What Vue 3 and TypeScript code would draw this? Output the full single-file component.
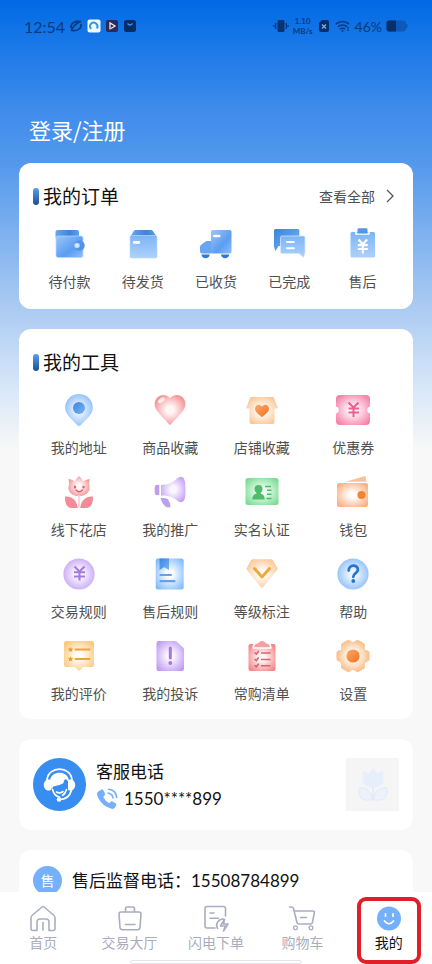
<script setup lang="ts">
interface Entry {
  icon: string
  label: string
}

const orders: Entry[] = [
  { icon: 'wallet', label: '待付款' },
  { icon: 'parcel', label: '待发货' },
  { icon: 'truck', label: '已收货' },
  { icon: 'chat', label: '已完成' },
  { icon: 'refund', label: '售后' },
]

const tools: Entry[] = [
  { icon: 'pin', label: '我的地址' },
  { icon: 'heart', label: '商品收藏' },
  { icon: 'shop', label: '店铺收藏' },
  { icon: 'coupon', label: '优惠券' },
  { icon: 'tulip', label: '线下花店' },
  { icon: 'horn', label: '我的推广' },
  { icon: 'idcard', label: '实名认证' },
  { icon: 'purse', label: '钱包' },
  { icon: 'yen', label: '交易规则' },
  { icon: 'book', label: '售后规则' },
  { icon: 'level', label: '等级标注' },
  { icon: 'help', label: '帮助' },
  { icon: 'review', label: '我的评价' },
  { icon: 'complaint', label: '我的投诉' },
  { icon: 'checklist', label: '常购清单' },
  { icon: 'gear', label: '设置' },
]

const tabs: Entry[] = [
  { icon: 'tab-home', label: '首页' },
  { icon: 'tab-hall', label: '交易大厅' },
  { icon: 'tab-flash', label: '闪电下单' },
  { icon: 'tab-cart', label: '购物车' },
  { icon: 'tab-me', label: '我的' },
]

const activeTab = '我的'

interface Glow {
  id: string
  inner: string
  outer: string
}

const glows: Glow[] = [
  { id: 'g-blue', inner: '#eaf4ff', outer: '#80b6fb' },
  { id: 'g-red', inner: '#fff6f5', outer: '#f58489' },
  { id: 'g-orange', inner: '#fffcf8', outer: '#fbc08a' },
  { id: 'g-pink', inner: '#fff4f8', outer: '#f77ea8' },
  { id: 'g-violet', inner: '#faf6ff', outer: '#c09af3' },
  { id: 'g-green', inner: '#ecfef0', outer: '#7bdb95' },
  { id: 'g-peach', inner: '#fffcfa', outer: '#fbae7e' },
  { id: 'g-sky', inner: '#fafdff', outer: '#82bdfb' },
  { id: 'g-amber', inner: '#fffcf5', outer: '#fbc777' },
]
</script>

<template>
  <div class="screen">
    <svg class="sprite" width="0" height="0" aria-hidden="true">
      <defs>
        <radialGradient v-for="g in glows" :id="g.id" :key="g.id" cx="0.5" cy="0.5" r="0.62">
          <stop offset="0.2" :stop-color="g.inner" />
          <stop offset="1" :stop-color="g.outer" />
        </radialGradient>
        <linearGradient id="l-deep" x1="0" y1="0" x2="1" y2="1">
          <stop offset="0" stop-color="#3a84de" />
          <stop offset="1" stop-color="#79b4f8" />
        </linearGradient>
        <linearGradient id="l-mid" x1="0" y1="0" x2="1" y2="1">
          <stop offset="0" stop-color="#9cc7fb" />
          <stop offset="0.6" stop-color="#5b9df0" />
          <stop offset="1" stop-color="#8fc0fa" />
        </linearGradient>
        <linearGradient id="l-soft" x1="0" y1="0" x2="0" y2="1">
          <stop offset="0" stop-color="#7db4f6" />
          <stop offset="1" stop-color="#add1fc" />
        </linearGradient>
        <linearGradient id="l-lid" x1="0" y1="0" x2="1" y2="0">
          <stop offset="0" stop-color="#6aa6ee" />
          <stop offset="0.6" stop-color="#3f83d8" />
          <stop offset="1" stop-color="#5f9eea" />
        </linearGradient>
        <linearGradient id="l-orange" x1="0" y1="0" x2="1" y2="1">
          <stop offset="0" stop-color="#ffa86a" />
          <stop offset="1" stop-color="#f0721e" />
        </linearGradient>
        <radialGradient id="g-gear" gradientUnits="userSpaceOnUse" cx="17" cy="17" r="17">
          <stop offset="0.3" stop-color="#fffaf4" />
          <stop offset="1" stop-color="#fab981" />
        </radialGradient>
      </defs>

      <symbol id="wallet" viewBox="0 0 34 34">
        <rect x="2.5" y="3" width="23.5" height="9" rx="2" fill="url(#l-lid)" />
        <rect x="3" y="9" width="27" height="21.500" rx="2" fill="url(#l-mid)" stroke="#b7d7fd" stroke-width="0.7" />
        <path d="M29 14c1.700 1.500 2.700 2.500 2.700 4.500S30.700 22 29 23.500c-3 1-8-.5-8-5s5-6 8-4.500z" fill="#4f94ec" />
        <circle cx="24" cy="18.500" r="2.800" fill="#b9dafd" />
        <circle cx="24" cy="18.500" r="1.300" fill="#e9f4ff" />
      </symbol>
      <symbol id="parcel" viewBox="0 0 34 34">
        <path d="M9.500 3h15.500q1 0 1.700.8L31 10H4l4-6.200Q8.500 3 9.500 3z" fill="url(#l-lid)" />
        <rect x="4" y="8.500" width="27" height="22.500" rx="1.500" fill="url(#l-soft)" stroke="#bcdafd" stroke-width="0.700" />
        <rect x="6.800" y="14" width="7.400" height="2.800" rx="1.400" fill="#fff" />
      </symbol>
      <symbol id="truck" viewBox="0 0 34 34">
        <path d="M2.500 17.500l4-3Q7 14 8 14h4v12.500H3q-2 0-2-2v-4.500q0-1.700 1.500-2.500z" fill="#69a6f1" />
        <rect x="12" y="3" width="20.500" height="23.500" rx="1.500" fill="url(#l-mid)" />
        <rect x="14" y="7.700" width="7.500" height="2.600" rx="1.300" fill="#fff" />
        <path d="M2.500 27.500h8.200c-.4 5-7.800 5-8.200 0zM22 27.500h8.200c-.4 5-7.800 5-8.200 0z" fill="#3278d0" />
      </symbol>
      <symbol id="chat" viewBox="0 0 34 34">
        <path d="M3.500 2h22.300q1.500 0 1.500 1.500V19H6.500l-3 5-1.500-4V3.500Q2 2 3.500 2z" fill="url(#l-deep)" />
        <path d="M10 9h21.500q1.500 0 1.500 1.500V26l-1.500 4.500L27 26.500H10q-1.500 0-1.500-1.500V10.500Q8.500 9 10 9z" fill="url(#l-soft)" stroke="#d2e6fe" stroke-width="0.8" />
        <path d="M15 15h6.800M15 21.200h6.800" stroke="#fff" stroke-width="2" stroke-linecap="round" />
      </symbol>
      <symbol id="refund" viewBox="0 0 34 34">
        <rect x="5.500" y="5" width="24.500" height="25.500" rx="1.500" fill="url(#l-soft)" />
        <path d="M11 4.500v2.500h13V4.500" fill="none" stroke="#fff" stroke-width="1.500" />
        <rect x="12.500" y="1.200" width="10" height="5.300" rx="1.200" fill="#5896e6" />
        <path d="M13.500 12.500l4.300 4.800 4.300-4.800M17.800 17v9.500M12.800 18.200h10M12.800 22h10" fill="none" stroke="#fff" stroke-width="2.200" />
      </symbol>

      <symbol id="pin" viewBox="0 0 34 34">
        <path d="M17 1C9 1 3.200 7 3.200 14.700c0 6.300 4.800 9.800 12 17.300q1.800 1.800 3.600 0c7.200-7.500 12-11 12-17.300C30.800 7 25 1 17 1z" fill="url(#g-blue)" />
        <circle cx="17" cy="15" r="6" fill="url(#l-deep)" />
      </symbol>
      <symbol id="heart" viewBox="0 0 34 34">
        <path d="M17 5.200C13.500 1 8 1.300 4.800 4 .5 8 1 14 4 17.800c3 3.900 7.500 8.700 12 13.400q1 1 2 0c4.500-4.700 9-9.500 12-13.400C33 14 33.500 8 29.200 4 26 1.300 20.500 1 17 5.200z" fill="url(#g-red)" />
        <ellipse cx="8.300" cy="7.300" rx="4" ry="2" transform="rotate(-35 8.300 7.300)" fill="#fff" fill-opacity="0.75" />
      </symbol>
      <symbol id="shop" viewBox="0 0 34 34">
        <path d="M7 4h20q1.500 0 2 1.200l3.500 8.800q.4 1.500-1 1.500H29.500V29q0 2-2 2h-21q-2 0-2-2V15.500H2.500q-1.500 0-1-1.500L5 5.200Q5.500 4 7 4z" fill="url(#g-orange)" />
        <path d="M17 13.500c-3-3.500-7-1.200-7 2.300 0 3 3.500 5.500 6 7.700q1 .9 2 0c2.500-2.200 6-4.700 6-7.700 0-3.500-4-5.800-7-2.300z" fill="url(#l-orange)" />
      </symbol>
      <symbol id="coupon" viewBox="0 0 34 34">
        <path d="M4 2h26q4 0 4 4v7.500a3.600 3.600 0 0 0 0 7V28q0 4-4 4H4q-4 0-4-4v-7.500a3.600 3.600 0 0 0 0-7V6Q0 2 4 2z" fill="url(#g-pink)" />
        <path d="M12.500 9.500l5 5 5-5M17.500 14.500v9.500M12.500 15.500h10.500M12.500 19.500h10.500" fill="none" stroke="#ef5f8e" stroke-width="2" />
      </symbol>
      <symbol id="tulip" viewBox="0 0 34 34">
        <path d="M17 1q3 2.300 4 5.500 3-2.500 6.500-2.500Q26.500 7 27.500 12c.8 5-4 9.200-10.500 9.200S5.700 17 6.500 12Q7.500 7 6.500 4 10 4 13 6.500 14 3.300 17 1z" fill="url(#g-red)" />
        <path d="M16 20.500h2v12h-2z" fill="#fcd6d9" />
        <path d="M3 21.500c7-.5 12 4 12.800 11.500H9.500C4.800 33 2.800 28 3 21.500zM31 21.500c-7-.5-12 4-12.800 11.500h6.300c4.700 0 6.700-5 6.500-11.500z" fill="#f58b98" />
        <path d="M14 15q3 3.500 6.500 0" fill="none" stroke="#dc5c6c" stroke-width="1.300" stroke-linecap="round" />
        <ellipse cx="13" cy="12" rx="1.200" ry="1.600" fill="#e0606e" />
        <ellipse cx="21.500" cy="12" rx="1.200" ry="1.600" fill="#e0606e" />
      </symbol>
      <symbol id="horn" viewBox="0 0 34 34">
        <path d="M2 10.500q2-1 4.300-.5v10q-2.300.5-4.300-.5-.8-4.500 0-9z" fill="#bc9df0" />
        <path d="M8 10c8 0 12.500-3 16-6.500Q27 .8 30 2.500q2.500 2 2.500 12.500T30 26.500q-3 1.700-6-1C20.500 22 16 20.500 8 20.500z" fill="url(#g-violet)" />
        <path d="M7.500 22.800q6 .2 7.500 1.500 2 2.700 2.500 7.700-3 1-5-.5-4-3.500-5-8.700z" fill="#bca0ef" />
      </symbol>
      <symbol id="idcard" viewBox="0 0 34 34">
        <rect x="0.500" y="3" width="33" height="27" rx="2.500" fill="url(#g-green)" />
        <circle cx="13.500" cy="14" r="4" fill="#4fbb6d" />
        <path d="M11.500 16h4v2.500c3 .8 4.200 2.500 4.200 6H7.300c0-3.500 1.200-5.200 4.200-6z" fill="#4fbb6d" />
        <path d="M20 11.500h6M22 15.200h4.500M22 19.200h4.500M21.500 23.500h5" stroke="#4fbb6d" stroke-width="1.500" />
      </symbol>
      <symbol id="purse" viewBox="0 0 34 34">
        <path d="M10 6.700L28 1.200q1.500-.4 1.700 1l.6 4.500z" fill="#fbc19a" />
        <rect x="1" y="8" width="31" height="24" rx="2.500" fill="url(#g-peach)" />
        <circle cx="25.500" cy="20" r="4" fill="#f28333" />
      </symbol>
      <symbol id="yen" viewBox="0 0 34 34">
        <circle cx="17" cy="17" r="15.600" fill="url(#g-violet)" />
        <path d="M12.500 9.500l5 5 5-5M17.500 14.500v9M12 15.300h11M12 19.500h11" fill="none" stroke="#a47be0" stroke-width="2.100" />
      </symbol>
      <symbol id="book" viewBox="0 0 34 34">
        <rect x="2.700" y="1.500" width="28" height="31" rx="2" fill="url(#g-sky)" />
        <path d="M6.500 1.500h9.500v11.500l-4.700-2.800L6.500 13z" fill="url(#l-deep)" />
        <path d="M7.500 18h10.500M7.500 24.200h14" stroke="#66a2e4" stroke-width="2.200" stroke-linecap="round" />
      </symbol>
      <symbol id="level" viewBox="0 0 34 34">
        <path d="M8 2.300h18q1.200 0 1.900 1l4.300 7.500q.7 1.200-.2 2.300L18.300 30q-1.300 1.300-2.600 0L2 13.100q-.9-1.100-.2-2.300l4.300-7.500q.7-1 1.900-1z" fill="url(#g-orange)" />
        <path d="M9.500 11.500l7.500 8.500 7.500-8.500" fill="none" stroke="#ecaa3c" stroke-width="3" stroke-linecap="round" stroke-linejoin="round" />
      </symbol>
      <symbol id="help" viewBox="0 0 34 34">
        <circle cx="17" cy="17" r="15.600" fill="url(#g-blue)" />
        <path d="M12.700 13.500c0-6.300 9.200-6.300 9.200-.7 0 3.300-4.600 3.300-4.600 7" fill="none" stroke="#2873d2" stroke-width="2.800" stroke-linecap="round" />
        <circle cx="17.300" cy="24" r="1.900" fill="#2873d2" />
      </symbol>
      <symbol id="review" viewBox="0 0 34 34">
        <path d="M4.500 2h25q2.500 0 2.500 2.500v21q0 2.500-2.500 2.500H21l-3 3.300q-1 .9-2 0L13 28H4.500Q2 28 2 25.500v-21Q2 2 4.500 2z" fill="url(#g-amber)" />
        <path d="M13.500 10.500h14M13.500 20h14" stroke="#eea23c" stroke-width="2" stroke-linecap="round" />
        <path d="M8.500 7.900l.9 1.700 1.900.2-1.400 1.300.4 1.900-1.800-.9-1.800.9.400-1.900-1.400-1.300 1.900-.2zM8.500 17.400l.9 1.700 1.900.2-1.400 1.300.4 1.900-1.800-.9-1.800.9.400-1.900-1.400-1.300 1.900-.2z" fill="#ee9d34" />
      </symbol>
      <symbol id="complaint" viewBox="0 0 34 34">
        <path d="M5.500 2H22q1 0 1.800.7l6.500 6q.7.800.7 1.800V30q0 2-2 2H5.500q-2 0-2-2V4q0-2 2-2z" fill="url(#g-violet)" />
        <rect x="15.800" y="7.500" width="3" height="13" rx="1.500" fill="#a277e3" />
        <circle cx="17.300" cy="24" r="1.900" fill="#a277e3" />
      </symbol>
      <symbol id="checklist" viewBox="0 0 34 34">
        <rect x="3.500" y="5" width="27" height="27" rx="2" fill="url(#g-red)" />
        <path d="M9 8.300q.2-3.300 4-4 4-5 8 0 3.800.7 4 4z" fill="#f7a0a3" stroke="#fff" stroke-width="3" paint-order="stroke" />
        <path d="M9.500 13.500l1.800 1.500 2.400-3M9.500 20l1.800 1.500 2.400-3M9.500 26.300l1.800 1.500 2.400-3M16 14h9.500M16 20.500h9.500M16 26.800h9.500" fill="none" stroke="#e0626b" stroke-width="1.600" />
      </symbol>
      <symbol id="gear" viewBox="0 0 34 34">
        <path d="M31.500 14v6L27 22.700l-.15 5.400-5.200 3L17 28.500l-4.650 2.600-5.200-3L7 22.700 2.500 20v-6L7 11.300l.15-5.400 5.200-3L17 5.500l4.650-2.600 5.200 3 .15 5.400z" fill="url(#g-gear)" stroke="url(#g-gear)" stroke-width="4" stroke-linejoin="round" />
        <circle cx="17" cy="17" r="6.600" fill="url(#l-orange)" />
      </symbol>

      <symbol id="tab-home" viewBox="0 0 28 28">
        <path d="M3.500 11L13 3q1-.8 2 0l9.500 8q1.500 1.200 1.500 3v10.500q0 2-2 2h-4V18q0-3-3-3h-6q-3 0-3 3v8.500H4q-2 0-2-2V14q0-1.800 1.500-3zM14 18.500V26" fill="none" stroke="#a9adc0" stroke-width="1.600" stroke-linecap="round" stroke-linejoin="round" />
      </symbol>
      <symbol id="tab-hall" viewBox="0 0 28 28">
        <path d="M9.500 8V4.500q0-1.500 1.500-1.500h6q1.500 0 1.500 1.500V8M5 8h18q2 0 2 2l-1 13.500q-.2 2.200-2.500 2.200h-15Q4.200 25.700 4 23.500L3 10q0-2 2-2zM9.500 20.500h9.500" fill="none" stroke="#a9adc0" stroke-width="1.600" stroke-linecap="round" stroke-linejoin="round" />
      </symbol>
      <symbol id="tab-flash" viewBox="0 0 28 28">
        <path d="M13 24H5q-2 0-2-2V4.500q0-2 2-2h16.500q2 0 2 2V12M8 9h4M8 14.300h8.500M15.500 24.500c-2.500-5 1-9.500 6-9.500M22.500 15.500l-4 6.500h5l-2 5 4.500-7h-4.500z" fill="none" stroke="#a9adc0" stroke-width="1.600" stroke-linecap="round" stroke-linejoin="round" />
      </symbol>
      <symbol id="tab-cart" viewBox="0 0 28 28">
        <path d="M1.500 3H4q1 0 1.400 1.200L9 18.500q.4 1.500 2 1.500h11.500q1.500 0 1.900-1.500L26.300 9q.4-2-1.500-2H6.300M12.500 13.500h6" fill="none" stroke="#a9adc0" stroke-width="1.600" stroke-linecap="round" stroke-linejoin="round" />
        <circle cx="7.500" cy="23.700" r="1.900" fill="none" stroke="#a9adc0" stroke-width="1.300" />
        <circle cx="23" cy="23.700" r="1.900" fill="none" stroke="#a9adc0" stroke-width="1.300" />
      </symbol>
      <symbol id="tab-me" viewBox="0 0 28 28">
        <circle cx="14" cy="14.500" r="12" fill="#74b0fb" />
        <path d="M10.500 9.800v2.400M18 9.800v2.400M9.500 17q4.500 5.500 9 0" fill="none" stroke="#fff" stroke-width="1.700" stroke-linecap="round" />
      </symbol>
    </svg>

    <main class="content">
      <header class="status">
        <span class="clock">12:54</span>
        <svg class="status-icon" viewBox="0 0 14 14" aria-hidden="true">
          <path d="M2 8.500C1.500 4.500 6 1.500 11 2.500M12 5.500c.5 4-4 7-9 6M2.500 11.500C3 8 8 3.500 11.500 2.500" fill="none" stroke="#0b3a7c" stroke-width="1.700" stroke-linecap="round" />
        </svg>
        <svg class="status-icon" viewBox="0 0 14 14" aria-hidden="true">
          <rect x="0.500" y="0.500" width="13" height="13" rx="2" fill="#eef8ff" />
          <path d="M4 10C1 5 6 2 9 4.500q2.500 2 1 5" fill="none" stroke="#3b95dc" stroke-width="2" />
        </svg>
        <svg class="status-icon" viewBox="0 0 14 14" aria-hidden="true">
          <rect x="1" y="1" width="12" height="12" rx="2" fill="#2a2b56" />
          <path d="M5 10.500V4l5 3-4 2.500" fill="none" stroke="#f3e6f2" stroke-width="1.300" />
        </svg>
        <svg class="status-icon" viewBox="0 0 14 14" aria-hidden="true">
          <rect x="1" y="1" width="12" height="12" rx="2.500" fill="#082c66" />
          <path d="M4.500 4.500q2.500 3 5 0" fill="none" stroke="#3d95f5" stroke-width="1.300" />
        </svg>
        <span class="spacer"></span>
        <svg class="status-icon wide" viewBox="0 0 16 14" aria-hidden="true">
          <rect x="4.500" y="1" width="7" height="12" rx="1.500" fill="#0a3474" />
          <path d="M2.700 4v6M13.300 4v6M1 6v2M15 6v2" stroke="#0a3474" stroke-width="1.200" />
        </svg>
        <span class="speed"><span>1.10</span><span>MB/s</span></span>
        <svg class="status-icon" viewBox="0 0 14 14" aria-hidden="true">
          <path d="M5 1h5q2 0 2 2v8q0 2-2 2H4q-2 0-2-2V4z" fill="#082f6c" />
          <path d="M5 5.500l4 4M9 5.500l-4 4" stroke="#74aef5" stroke-width="1.300" />
        </svg>
        <svg class="status-icon wide" viewBox="0 0 16 14" aria-hidden="true">
          <path d="M1 5q6.500-5 13 0M3 7.700q4.500-3.500 9 0M5 10.200q2.500-2 5 0" fill="none" stroke="#0b3a7c" stroke-width="1.600" />
          <circle cx="7.500" cy="12" r="1" fill="#0b3a7c" />
          <path d="M13 8v4" stroke="#0b3a7c" stroke-width="1.500" stroke-dasharray="1.500 1" />
        </svg>
        <span class="percent">46%</span>
        <svg class="battery" viewBox="0 0 22 12" aria-hidden="true">
          <path d="M3 .5h14q3 0 3 3v.5h1.500v4H20v.5q0 3-3 3H3q-2.500 0-2.500-2.500V3Q.5.500 3 .5z" fill="#0d58bb" />
          <path d="M3 .5h7v11H3Q.5 11.500.5 9V3Q.5.500 3 .5z" fill="#082f68" />
        </svg>
      </header>

      <a class="login" href="#login">登录/注册</a>

      <div class="cards">
        <section class="card">
          <div class="card-head">
            <h2 class="title">我的订单</h2>
            <a class="more" href="#orders">
              查看全部
              <svg class="chevron" viewBox="0 0 10 14" aria-hidden="true">
                <path d="M2 1l6 6-6 6" fill="none" stroke="#555" stroke-width="1.300" />
              </svg>
            </a>
          </div>
          <div class="orders">
            <button v-for="item in orders" :key="item.label" type="button" class="entry">
              <svg class="icon" aria-hidden="true"><use :href="'#' + item.icon" /></svg>
              <span>{{ item.label }}</span>
            </button>
          </div>
        </section>

        <section class="card">
          <div class="card-head">
            <h2 class="title">我的工具</h2>
          </div>
          <div class="tools">
            <button v-for="item in tools" :key="item.label" type="button" class="entry">
              <svg class="icon" aria-hidden="true"><use :href="'#' + item.icon" /></svg>
              <span>{{ item.label }}</span>
            </button>
          </div>
        </section>

        <section class="card service">
          <svg class="avatar" viewBox="0 0 53 53" aria-hidden="true">
            <circle cx="26.500" cy="26.500" r="26.500" fill="#378df0" />
            <path d="M14 22C15 7.500 38 7.500 39 22" fill="none" stroke="#fff" stroke-width="1.800" />
            <path d="M17 22.500C18 12 35 12 36 22.500l-1 1C33 20 31 21 30.500 25q-3 2-10.500 3.500L19 32q-2-4-2-9.500z" fill="#fff" />
            <path d="M14.500 21.500h2q1.500 0 1.500 1.500v8q0 1.500-1.500 1.500h-2C9.500 31 9.500 23 14.500 21.500zM38.500 21.500h-2Q35 21.500 35 23v8q0 1.500 1.500 1.500h2c5-1.500 5-9.500 0-11z" fill="#fff" />
            <path d="M19.500 31.500q2 7 7 7.500M33.500 31.500q-1 4-4 6M23.500 34q3 2 6.500-.5" fill="none" stroke="#fff" stroke-width="1.600" stroke-linecap="round" />
            <path d="M38.500 32c-1.500 6-6 9.500-12 9.500" fill="none" stroke="#fff" stroke-width="1.800" />
            <circle cx="26" cy="41.500" r="2.300" fill="#fff" />
          </svg>
          <div class="service-text">
            <span class="service-name">客服电话</span>
            <a class="phone" href="tel:1550">
              <svg class="phone-icon" viewBox="0 0 22 22" aria-hidden="true">
                <path d="M3 3l2.500-1.500q1-.5 1.700.5L9 5.500q.5 1-.3 1.800L7.200 9q2 4 6 6.200l1.600-1.500q.9-.8 1.800-.2l3.200 2q1 .7.400 1.700L19 19.500q-1.200 1.700-3.300 1.300C8 18.700 2 12.500 1 6q-.2-2 2-3z" fill="#74b0fb" />
                <path d="M12 5q4.500.7 5 5M12.500 1.300Q20 2 20.700 9.500" fill="none" stroke="#74b0fb" stroke-width="1.600" stroke-linecap="round" />
              </svg>
              <span class="digits">1550****899</span>
            </a>
          </div>
          <svg class="flower" viewBox="0 0 53 53" aria-hidden="true">
            <path d="M27 10.500q3 2.500 4.200 5 3.300-2.300 6-2.500-.7 3 .3 8c.5 4.500-4 8.500-10.500 8.500S16 25.500 16.500 21q1-5 .3-8 2.700.2 6 2.500 1.200-2.500 4.200-5z" fill="#e6eefb" stroke="#eef4fd" />
            <path d="M13 30c8-1 13 4 13.200 12H20c-5.500 0-7.500-5-7-12zM41 30c-8-1-13 4-13.200 12H34c5.500 0 7.500-5 7-12z" fill="#ecf2fb" stroke="#e0eaf9" />
            <path d="M27 29v12" stroke="#dfe9f9" stroke-width="1.500" />
          </svg>
        </section>

        <section class="card supervise">
          <span class="badge">售</span>
          <p class="supervise-text">售后监督电话：<a class="digits" href="tel:15508784899">15508784899</a></p>
        </section>
      </div>
    </main>

    <nav class="tabbar">
      <a
        v-for="tab in tabs"
        :key="tab.label"
        :href="'#' + tab.icon"
        class="tab"
        :class="{ active: tab.label === activeTab }"
      >
        <svg class="tab-icon" aria-hidden="true"><use :href="'#' + tab.icon" /></svg>
        <span>{{ tab.label }}</span>
      </a>
      <span class="home-bar"></span>
    </nav>
  </div>
</template>

<style>
body {
  margin: 0;
  background: #f8f8f8;
}
</style>

<style scoped>
.screen {
  display: flex;
  flex-direction: column;
  height: 100vh;
  overflow: hidden;
  background: #f8f8f8 linear-gradient(180deg, #006ae5 0, #3f8ceb 110px, #5599ec 165px, #a9caf2 305px, #d9e7f8 390px, #f8f8f8 450px) no-repeat;
  color: #111;
  font-family: "Noto Sans CJK SC", sans-serif;
}

.sprite {
  position: absolute;
}

a {
  color: inherit;
  text-decoration: none;
}

.content {
  flex: 1;
  min-height: 0;
  overflow-y: auto;
  scrollbar-width: none;
}

.status {
  display: flex;
  align-items: center;
  gap: 4px;
  height: 52px;
  padding: 0 24px;
  color: #0b3a7c;
  font-family: Lato, "Noto Sans", sans-serif;
}

.clock {
  font-size: 16px;
}

.status-icon {
  width: 14px;
  height: 14px;
}

.status-icon.wide {
  width: 16px;
}

.spacer {
  flex: 1;
}

.speed {
  display: flex;
  flex-direction: column;
  align-items: center;
  font-size: 8px;
  font-weight: 700;
  line-height: 10px;
}

.percent {
  font-size: 14px;
}

.battery {
  width: 22px;
  height: 12px;
}

.login {
  display: block;
  width: fit-content;
  margin: 62px 0 19px 29px;
  color: #fff;
  font-size: 22px;
  line-height: 30px;
}

.cards {
  display: flex;
  flex-direction: column;
  gap: 20px;
  padding: 0 19px 20px;
}

.card {
  padding: 20px 14px 16px;
  border-radius: 12px;
  background: #fff;
}

.card-head {
  display: flex;
  align-items: center;
  justify-content: space-between;
  height: 26px;
  margin-bottom: 18px;
}

.title {
  display: flex;
  align-items: center;
  gap: 4px;
  margin: 0;
  font-size: 19px;
  font-weight: 400;
  line-height: 26px;
}

.title::before {
  width: 6px;
  height: 17px;
  border-radius: 3px;
  background: linear-gradient(180deg, #5a9df0, #1c4f92);
  content: "";
}

.more {
  display: flex;
  align-items: center;
  gap: 10px;
  padding-right: 4px;
  color: #505050;
  font-size: 14px;
}

.chevron {
  width: 10px;
  height: 14px;
}

.orders,
.tools {
  display: grid;
}

.orders {
  grid-template-columns: repeat(5, 1fr);
  padding-bottom: 2px;
}

.tools {
  grid-template-columns: repeat(4, 1fr);
  row-gap: 18px;
}

.entry {
  display: flex;
  flex-direction: column;
  align-items: center;
  gap: 10px;
  padding: 0;
  border: 0;
  background: none;
  color: #505050;
  font-family: inherit;
  font-size: 14px;
  line-height: 20px;
  white-space: nowrap;
}

.icon {
  width: 34px;
  height: 34px;
}

.service {
  display: flex;
  align-items: center;
  gap: 10px;
  padding: 19px 14px;
}

.avatar,
.flower {
  flex: none;
  width: 53px;
  height: 53px;
}

.flower {
  background: #f5f5f5;
}

.service-text {
  display: flex;
  flex: 1;
  flex-direction: column;
  gap: 4px;
}

.service-name {
  font-size: 17px;
  line-height: 24px;
}

.phone {
  display: flex;
  align-items: center;
  gap: 6px;
  font-size: 17px;
  line-height: 24px;
}

.phone-icon {
  width: 22px;
  height: 22px;
}

.digits {
  font-family: Lato, "Noto Sans", sans-serif;
  font-size: 17px;
}

.supervise {
  display: flex;
  align-items: center;
  gap: 10px;
  padding: 16px 14px;
}

.badge {
  width: 29px;
  height: 29px;
  border-radius: 50%;
  background: #74b0fb;
  color: #fff;
  font-size: 14px;
  line-height: 29px;
  text-align: center;
}

.supervise-text {
  margin: 0;
  font-size: 17px;
  line-height: 24px;
}

.tabbar {
  position: relative;
  display: flex;
  flex: none;
  height: 72px;
  background: #fff;
}

.tab {
  position: relative;
  display: flex;
  flex: 1;
  flex-direction: column;
  align-items: center;
  padding-top: 12px;
  color: #a9adbd;
  font-size: 14px;
  line-height: 20px;
}

.tab-icon {
  width: 28px;
  height: 28px;
}

.tab.active {
  color: #111;
}

.tab.active::after {
  position: absolute;
  inset: 5px 11px 0;
  border: 4px solid #e01f28;
  border-radius: 9px;
  content: "";
}

.home-bar {
  position: absolute;
  bottom: 0;
  left: 30%;
  width: 40%;
  height: 4px;
  border: 1px solid #e4e4e6;
  border-radius: 3px;
  background: #fff;
  box-sizing: border-box;
}
</style>
